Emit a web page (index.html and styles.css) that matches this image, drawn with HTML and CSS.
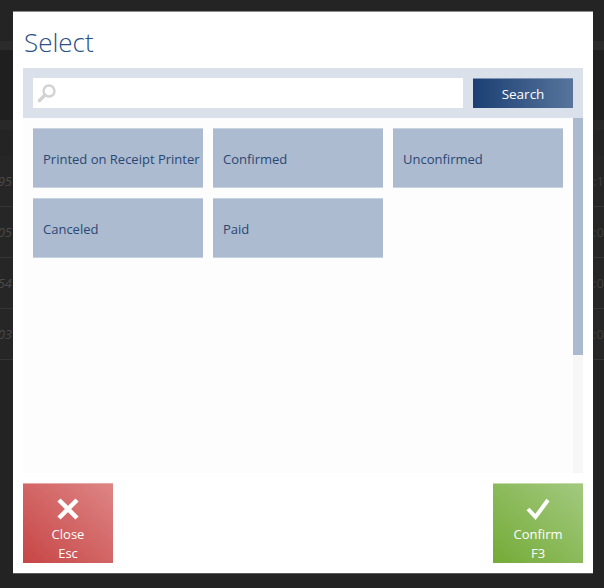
FILE: index.html
```html
<!DOCTYPE html>
<html lang="en">
<head>
  <meta charset="UTF-8" />
  <title>Select</title>
  <link rel="stylesheet" href="styles.css">
</head>
<body>

  <div class="page">
    <div class="topbar"></div>
    <div class="band"></div>
    <div class="toolbar"></div>
    <div class="thead">
      <span class="cell-left"></span>
      <span class="cell-right">O</span>
    </div>
    <div class="row"><span class="cell-left">95</span><span class="cell-right">:17</span></div>
    <div class="row"><span class="cell-left">05</span><span class="cell-right">:06</span></div>
    <div class="row"><span class="cell-left">54</span><span class="cell-right">:06</span></div>
    <div class="row"><span class="cell-left">03</span><span class="cell-right">:05</span></div>
  </div>

  <div class="dialog">
    <h1 class="dialog-title">Select</h1>

    <div class="search-panel">
      <div class="search-input">
        <svg class="search-icon" width="20" height="20" viewBox="0 0 20 20">
          <circle cx="12" cy="8" r="5.5" fill="none" stroke="#d2d2d2" stroke-width="2.4"/>
          <line x1="8" y1="12" x2="2.5" y2="17.5" stroke="#d2d2d2" stroke-width="3.4" stroke-linecap="round"/>
        </svg>
      </div>
      <button class="search-btn">Search</button>
    </div>

    <div class="list">
      <div class="tiles">
        <div class="tile">Printed on Receipt Printer</div>
        <div class="tile">Confirmed</div>
        <div class="tile">Unconfirmed</div>
        <div class="tile">Canceled</div>
        <div class="tile">Paid</div>
      </div>
      <div class="scrollbar"><div class="thumb"></div></div>
    </div>

    <div class="footer">
      <button class="action close">
        <svg width="24" height="24" viewBox="0 0 24 24">
          <path d="M3 3 L21 21 M21 3 L3 21" stroke="#fff" stroke-width="4.5" fill="none"/>
        </svg>
        <span>Close</span>
        <span>Esc</span>
      </button>
      <button class="action confirm">
        <svg width="24" height="24" viewBox="0 0 24 24">
          <path d="M2 12 L9.5 20 L22 3" stroke="#fff" stroke-width="4" fill="none"/>
        </svg>
        <span>Confirm</span>
        <span>F3</span>
      </button>
    </div>
  </div>

</body>
</html>
```

FILE: styles.css
```css
body {
  margin: 0;
  height: 588px;
  overflow: hidden;
  background-color: #232323;
  font-family: 'Open Sans', 'Noto Sans', sans-serif;
  position: relative;
}

/* background page behind the dialog */
.topbar {
  height: 41px;
  background-color: #242424;
}

.band {
  height: 9px;
  background-color: #2b2b2b;
}

.toolbar {
  height: 70px;
  background-color: #1f1f1f;
}

.thead {
  height: 10px;
  background-color: #282828;
  border-bottom: 26px solid #242424;
  display: flex;
  justify-content: space-between;
}

.thead .cell-right {
  color: #151a22;
  font-size: 15px;
  line-height: 16px;
  margin-top: 14px;
}

.row {
  height: 50px;
  border-bottom: 1px solid #353535;
  background-color: #262626;
  display: flex;
  justify-content: space-between;
  align-items: center;
}

.row:first-of-type {
  height: 49px;
}

.cell-left {
  width: 12px;
  color: #4a4a4a;
  font-size: 13px;
  font-style: italic;
  text-align: right;
  overflow: hidden;
  white-space: nowrap;
  direction: rtl;
}

.cell-right {
  width: 11px;
  color: #3e3e3e;
  font-size: 13px;
  overflow: hidden;
  white-space: nowrap;
}

/* dialog */
.dialog {
  position: absolute;
  top: 11px;
  left: 13px;
  width: 580px;
  height: 562px;
  box-sizing: border-box;
  background-color: #ffffff;
  border-top: 1px solid #8a8a8a;
  box-shadow: 0 1px 0 #5a5a5a;
  padding: 0 10px 10px;
  display: flex;
  flex-direction: column;
}

.dialog-title {
  margin: 0;
  height: 56px;
  padding-left: 1px;
  font-size: 26px;
  font-weight: 300;
  line-height: 60px;
  color: #2c5186;
}

.search-panel {
  height: 50px;
  box-sizing: border-box;
  padding: 10px;
  display: flex;
  gap: 10px;
  background-color: #dae1ea;
}

.search-input {
  flex: 1;
  background-color: #ffffff;
  display: flex;
  align-items: center;
  padding-left: 4px;
}

.search-btn {
  width: 100px;
  border: none;
  border-top: 1px solid #7f95b5;
  background: linear-gradient(to right, #1b3f73, #57759c);
  color: #ffffff;
  font-family: inherit;
  font-size: 13.5px;
  padding: 0;
}

.list {
  height: 355px;
  display: flex;
}

.tiles {
  flex: 1;
  padding: 10px 0 0 10px;
  display: grid;
  grid-template-columns: repeat(3, 170px);
  grid-auto-rows: 60px;
  gap: 10px;
  align-content: start;
  background-color: #fdfdfd;
}

.tile {
  background-color: #acbbcf;
  border-top: 1px solid #c9d3df;
  border-bottom: 1px solid #c9d3df;
  color: #2a4876;
  font-size: 13px;
  padding: 1px 0 0 10px;
  display: flex;
  align-items: center;
  white-space: nowrap;
}

.scrollbar {
  width: 10px;
  background-color: #f7f7f7;
}

.thumb {
  height: 237px;
  background-color: #abbacf;
}

.footer {
  margin-top: 10px;
  height: 80px;
  display: flex;
  justify-content: space-between;
}

.action {
  width: 90px;
  height: 80px;
  border: none;
  padding: 13px 0 0;
  display: flex;
  flex-direction: column;
  align-items: center;
  color: #ffffff;
  font-family: inherit;
  font-size: 13px;
  line-height: 19px;
}

.action svg {
  margin-bottom: 4px;
}

.close {
  border-top: 1px solid #e8a6a6;
  background: linear-gradient(to top right, #c74545, #de8585);
}

.confirm {
  border-top: 1px solid #c3dba8;
  background: linear-gradient(to top right, #74ab37, #a3c97f);
}
```
